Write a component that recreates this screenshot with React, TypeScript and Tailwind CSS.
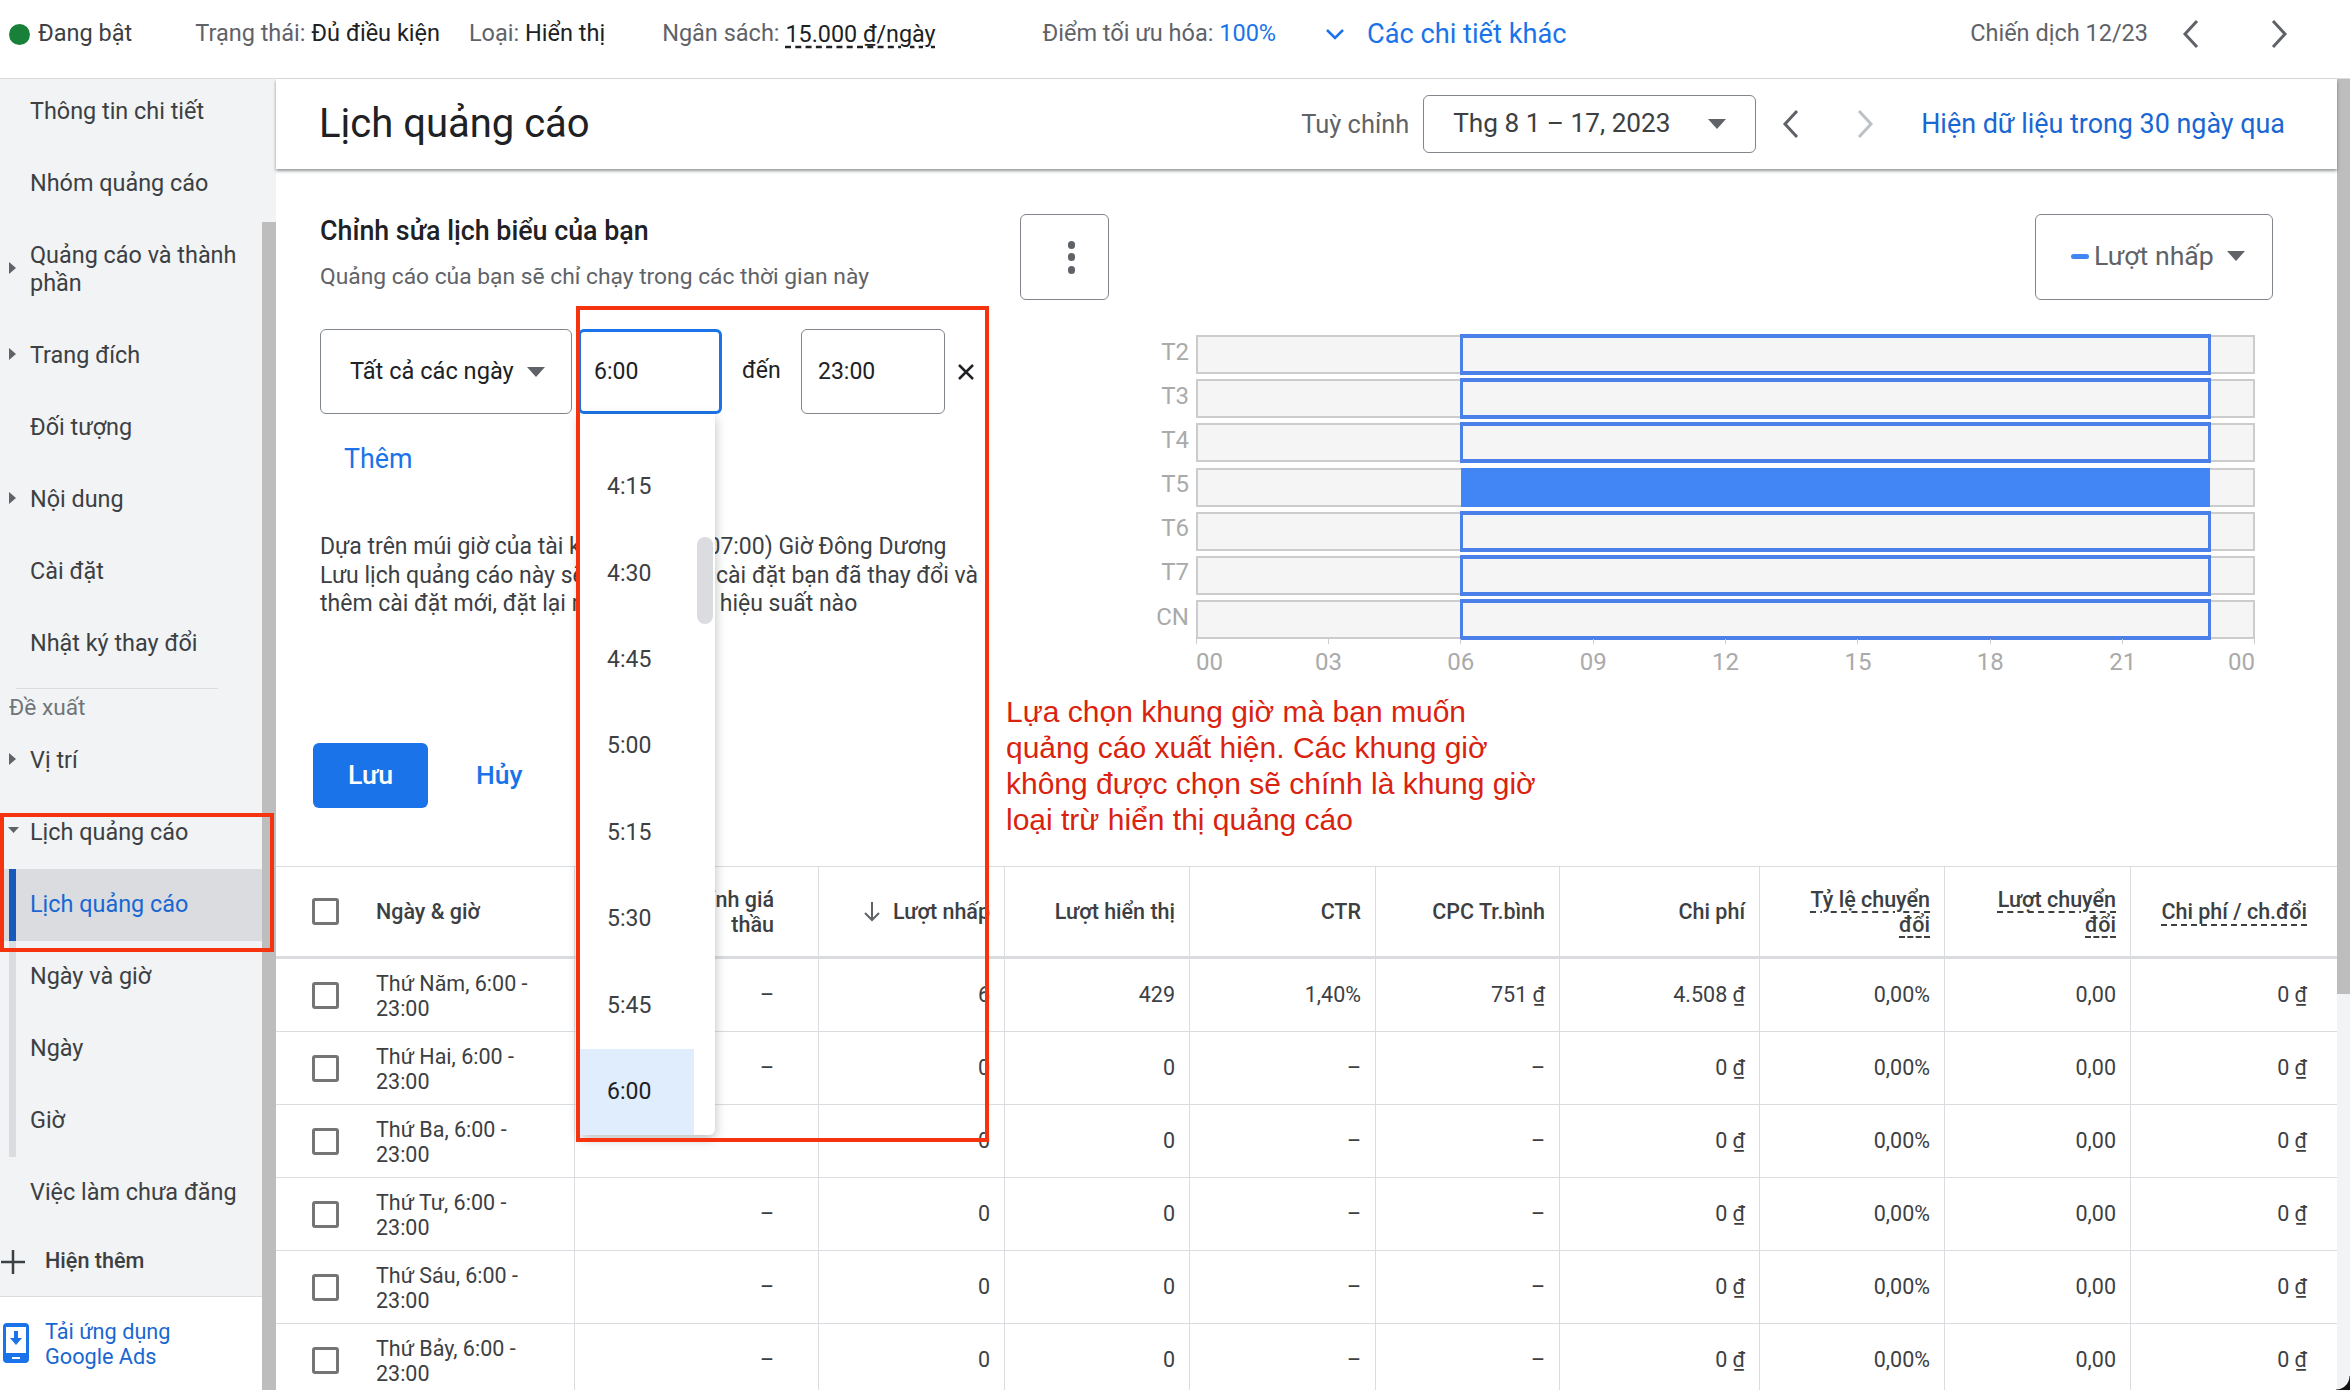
import type { ReactNode } from 'react';

function Chevron({ dir, color = '#5f6368' }: { dir: 'left' | 'right'; color?: string }) {
  return (
    <svg width="18" height="30" viewBox="0 0 18 30" fill="none" stroke={color} strokeWidth="3">
      <path d={dir === 'left' ? 'M15 2 L3 15 L15 28' : 'M3 2 L15 15 L3 28'} />
    </svg>
  );
}

function ArrowDown({ w = 18, h = 10, color = '#5f6368' }: { w?: number; h?: number; color?: string }) {
  return (
    <svg width={w} height={h} viewBox="0 0 18 10" preserveAspectRatio="none">
      <path d="M0 0 H18 L9 10 Z" fill={color} />
    </svg>
  );
}

function NavItem({ label, caret, className = 'h-[72px] pb-[2px]' }: { label: ReactNode; caret?: 'right' | 'down'; className?: string }) {
  return (
    <div className={`relative flex items-center pl-[30px] pr-2 text-[23.4px] leading-[28px] text-[#3c4043] ${className}`}>
      {caret === 'right' && (
        <svg className="absolute left-[9px] top-1/2 -mt-[8px]" width="7" height="12" viewBox="0 0 7 12">
          <path d="M0 0 L7 6 L0 12 Z" fill="#5f6368" />
        </svg>
      )}
      {caret === 'down' && (
        <svg className="absolute left-[8px] top-1/2 -mt-[6px]" width="11" height="6" viewBox="0 0 11 6">
          <path d="M0 0 H11 L5.5 6 Z" fill="#5f6368" />
        </svg>
      )}
      {label}
    </div>
  );
}

function Sidebar() {
  return (
    <div className="flex w-[262px] flex-none flex-col bg-[#f1f3f4]">
      <NavItem label="Thông tin chi tiết" className="h-[69px] pb-[5px]" />
      <NavItem label="Nhóm quảng cáo" />
      <NavItem label={<span>Quảng cáo và thành<br />phần</span>} caret="right" className="h-[100px] pb-[2px]" />
      <NavItem label="Trang đích" caret="right" />
      <NavItem label="Đối tượng" />
      <NavItem label="Nội dung" caret="right" />
      <NavItem label="Cài đặt" />
      <NavItem label="Nhật ký thay đổi" />
      <div className="mx-[16px] mt-[8px] h-[1px] w-[202px] bg-[#dadce0]" />
      <div className="flex h-[36px] items-center pl-[9px] pt-[3px] text-[22.7px] text-[#70757a]">Đề xuất</div>
      <NavItem label="Vị trí" caret="right" />
      <NavItem label="Lịch quảng cáo" caret="down" />
      <div className="relative">
        <div className="absolute left-[9px] top-0 h-[288px] w-[7px] bg-[#dadce0]" />
        <div className="absolute left-[9px] top-0 h-[72px] w-[7px] bg-[#185abc]" />
        <div className="flex h-[72px] items-center bg-[#dadce0] pb-[1px] pl-[30px] text-[23.4px] text-[#1967d2]">Lịch quảng cáo</div>
        <NavItem label="Ngày và giờ" />
        <NavItem label="Ngày" />
        <NavItem label="Giờ" />
      </div>
      <NavItem label="Việc làm chưa đăng" />
      <div className="flex h-[68px] flex-none items-center border-b border-[#dadce0] pb-[2px]">
        <svg className="ml-[1px]" width="24" height="24" viewBox="0 0 24 24" stroke="#3c4043" strokeWidth="2.5">
          <path d="M12 0 V24 M0 12 H24" />
        </svg>
        <span className="ml-[20px] text-[21.6px] font-medium text-[#3c4043]">Hiện thêm</span>
      </div>
      <div className="flex flex-1 items-start bg-white pt-[22px]">
        <svg className="ml-[3px] mt-[4px]" width="26" height="40" viewBox="0 0 26 40">
          <rect width="26" height="40" rx="4" fill="#1a73e8" />
          <rect x="3" y="4" width="20" height="26" fill="white" />
          <path d="M11 8 H15 V15 H19 L13 22 L7 15 H11 Z" fill="#1a73e8" />
          <rect x="9" y="34" width="8" height="2" fill="white" />
        </svg>
        <div className="ml-[16px] text-[21.7px] leading-[25px] text-[#1967d2]">Tải ứng dụng<br />Google Ads</div>
      </div>
    </div>
  );
}

function TopBar() {
  return (
    <div className="flex h-[79px] flex-none items-center border-b border-[#dadce0] bg-white pb-[10px] text-[23.5px] text-[#5f6368]">
      <div className="ml-[9px] h-[21px] w-[21px] flex-none rounded-full bg-[#188038]" />
      <span className="ml-[8px] text-[#3c4043]">Đang bật</span>
      <span className="ml-[63px]">Trạng thái: <span className="text-[#202124]">Đủ điều kiện</span></span>
      <span className="ml-[29px]">Loại: <span className="text-[#202124]">Hiển thị</span></span>
      <span className="ml-[57px]">Ngân sách:</span>
      <span className="ml-[6px] text-[23.3px] text-[#202124] underline decoration-dashed decoration-[#202124] underline-offset-[5px]">15.000 ₫/ngày</span>
      <span className="ml-[107px]">Điểm tối ưu hóa: <span className="text-[#1a73e8]">100%</span></span>
      <svg className="ml-[50px]" width="18" height="11" viewBox="0 0 18 11" fill="none" stroke="#1a73e8" strokeWidth="2.5">
        <path d="M1 1 L9 9 L17 1" />
      </svg>
      <span className="ml-[23px] text-[27.2px] text-[#1a73e8]">Các chi tiết khác</span>
      <span className="ml-auto">Chiến dịch 12/23</span>
      <div className="ml-[34px]"><Chevron dir="left" /></div>
      <div className="ml-[70px] mr-[62px]"><Chevron dir="right" /></div>
    </div>
  );
}

function PageHeader() {
  return (
    <div className="relative z-10 flex h-[90px] flex-none items-center bg-white pl-[43px] shadow-[0_2px_3px_rgba(60,64,67,0.55)]">
      <h1 className="text-[40px] font-normal text-[#202124]">Lịch quảng cáo</h1>
      <span className="ml-auto text-[25.4px] text-[#5f6368]">Tuỳ chỉnh</span>
      <div className="ml-[14px] flex h-[58px] w-[333px] items-center rounded-[6px] border border-[#80868b] pl-[29px] text-[26.2px] text-[#3c4043]">
        Thg 8 1 – 17, 2023
        <div className="ml-auto mr-[29px]"><ArrowDown /></div>
      </div>
      <div className="ml-[26px]"><Chevron dir="left" /></div>
      <div className="ml-[56px]"><Chevron dir="right" color="#bdc1c6" /></div>
      <span className="ml-[47px] mr-[52px] text-[26.9px] text-[#1967d2]">Hiện dữ liệu trong 30 ngày qua</span>
    </div>
  );
}

const times = ['4:15', '4:30', '4:45', '5:00', '5:15', '5:30', '5:45'];

function TimeDropdown() {
  return (
    <div className="absolute left-[2px] top-[85px] z-20 flex h-[721px] w-[135px] flex-col justify-end rounded-b-[6px] bg-white shadow-[0_4px_12px_rgba(60,64,67,0.35)]">
      <div className="absolute right-[2px] top-[123px] h-[87px] w-[16px] rounded-full bg-[#dadce0]" />
      {times.map((t) => (
        <div key={t} className="flex h-[86.4px] flex-none items-center pl-[27px] text-[23px] text-[#3c4043]">{t}</div>
      ))}
      <div className="flex h-[86px] w-[114px] flex-none items-center bg-[#e0edfd] pl-[27px] text-[23px] text-[#202124]">6:00</div>
    </div>
  );
}

function EditorForm() {
  return (
    <div className="w-[744px] flex-none pl-[44px]">
      <div className="mt-[46px] text-[26.8px] font-medium leading-[32px] text-[#202124]">Chỉnh sửa lịch biểu của bạn</div>
      <div className="mt-[16px] text-[22.8px] leading-[28px] text-[#5f6368]">Quảng cáo của bạn sẽ chỉ chạy trong các thời gian này</div>
      <div className="mt-[38px] flex h-[85px] items-center text-[23px] text-[#202124]">
        <div className="flex h-full w-[252px] items-center rounded-[6px] border border-[#80868b] pl-[29px] text-[23.6px]">
          Tất cả các ngày
          <div className="ml-[13px]"><ArrowDown /></div>
        </div>
        <div className="relative ml-[6px] h-full w-[144px]">
          <div className="flex h-full items-center rounded-[6px] border-[3px] border-[#1a73e8] pl-[13px] pt-[1px]">6:00</div>
          <TimeDropdown />
        </div>
        <span className="ml-[20px] w-[59px]">đến</span>
        <div className="flex h-full w-[144px] items-center rounded-[6px] border border-[#80868b] pl-[16px] pt-[1px]">23:00</div>
        <svg className="ml-[13px]" width="16" height="16" viewBox="0 0 16 16" stroke="#202124" strokeWidth="2.5">
          <path d="M1 1 L15 15 M15 1 L1 15" />
        </svg>
      </div>
      <div className="ml-[24px] mt-[30px] text-[26.8px] leading-[30px] text-[#1a73e8]">Thêm</div>
      <div className="mt-[59px] whitespace-nowrap text-[23px] leading-[28.5px] text-[#3c4043]">
        Dựa trên múi giờ của tài khoản (GMT+07:00) Giờ Đông Dương<br />
        Lưu lịch quảng cáo này sẽ xóa toàn bộ cài đặt bạn đã thay đổi và<br />
        thêm cài đặt mới, đặt lại mọi dữ liệu về hiệu suất nào
      </div>
      <div className="-ml-[7px] mt-[124px] flex items-center">
        <div className="flex h-[65px] w-[115px] items-center justify-center rounded-[6px] bg-[#1a73e8] text-[26.7px] font-medium text-white">Lưu</div>
        <span className="ml-[48px] text-[26.5px] font-medium text-[#1a73e8]">Hủy</span>
      </div>
    </div>
  );
}

const chartDays = ['T2', 'T3', 'T4', 'T5', 'T6', 'T7', 'CN'];
const ticks = ['03', '06', '09', '12', '15', '18', '21'];

function Chart() {
  return (
    <div className="mt-[35px] pl-[87px] text-[24px] text-[#aaaaaa]">
      <div className="flex flex-col gap-[5.2px]">
        {chartDays.map((d) => (
          <div key={d} className="-ml-[60px] flex h-[39px] items-center">
            <span className="w-[53px] pb-[6px] text-right leading-none">{d}</span>
            <div className="relative ml-[7px] h-full w-[1059px] border-[2px] border-[#cccccc] bg-[#f5f5f5]">
              {d === 'T5' ? (
                <div className="absolute -bottom-[2px] -top-[2px] left-[263px] w-[749px] bg-[#4285f4]" />
              ) : (
                <div className="absolute -bottom-[3px] -top-[3px] left-[262px] w-[751px] border-[3px] border-b-[4px] border-t-[4px] border-[#4a80e8]" />
              )}
            </div>
          </div>
        ))}
      </div>
      <div className="relative flex w-[1059px] justify-between">
        <div className="flex w-0 flex-none flex-col items-start">
          <div className="h-[5px] w-[1px] flex-none bg-[#cccccc]" />
          <div className="mt-[4px] leading-[28px]">00</div>
        </div>
        {ticks.map((t) => (
          <div key={t} className="flex w-0 flex-none flex-col items-center">
            <div className="h-[5px] w-[1px] flex-none bg-[#cccccc]" />
            <div className="mt-[4px] leading-[28px]">{t}</div>
          </div>
        ))}
        <div className="flex w-0 flex-none flex-col items-end">
          <div className="h-[5px] w-[1px] flex-none bg-[#cccccc]" />
          <div className="mt-[4px] leading-[28px]">00</div>
        </div>
      </div>
    </div>
  );
}

function Editor() {
  return (
    <div className="relative z-20 flex h-[697px] flex-none">
      <EditorForm />
      <div className="mt-[45px] flex h-[86px] w-[89px] flex-none flex-col items-center justify-center gap-[4.5px] rounded-[6px] border border-[#80868b] pl-[14px]">
        <div className="h-[8px] w-[7px] rounded-full bg-[#5f6368]" />
        <div className="h-[8px] w-[7px] rounded-full bg-[#5f6368]" />
        <div className="h-[8px] w-[7px] rounded-full bg-[#5f6368]" />
      </div>
      <div className="flex-1">
        <div className="mr-[64px] mt-[45px] ml-auto flex h-[86px] w-[238px] items-center rounded-[6px] border border-[#80868b] pb-[2px] pl-[35px] text-[26.7px] text-[#5f6368]">
          <div className="h-[5px] w-[18px] flex-none rounded-full bg-[#4285f4]" />
          <span className="ml-[5px] whitespace-nowrap">Lượt nhấp</span>
          <div className="ml-[13px]"><ArrowDown /></div>
        </div>
        <Chart />
      </div>
    </div>
  );
}

const gridCols = 'grid grid-cols-[299px_244px_186px_185px_186px_184px_200px_185px_186px_206px]';

const rows = [
  { d: 'Thứ Năm', clicks: '6', impr: '429', ctr: '1,40%', cpc: '751 ₫', cost: '4.508 ₫' },
  { d: 'Thứ Hai', clicks: '0', impr: '0', ctr: '–', cpc: '–', cost: '0 ₫' },
  { d: 'Thứ Ba', clicks: '0', impr: '0', ctr: '–', cpc: '–', cost: '0 ₫' },
  { d: 'Thứ Tư', clicks: '0', impr: '0', ctr: '–', cpc: '–', cost: '0 ₫' },
  { d: 'Thứ Sáu', clicks: '0', impr: '0', ctr: '–', cpc: '–', cost: '0 ₫' },
  { d: 'Thứ Bảy', clicks: '0', impr: '0', ctr: '–', cpc: '–', cost: '0 ₫' },
];

function Checkbox() {
  return <div className="ml-[36px] h-[27px] w-[27px] flex-none rounded-[3px] border-[3px] border-[#757575]" />;
}

function Num({ children, last, pr = 'pr-[14px]' }: { children: ReactNode; last?: boolean; pr?: string }) {
  return (
    <div className={`flex items-center justify-end whitespace-nowrap ${last ? '' : 'border-r'} border-[#dadce0] ${pr}`}>{children}</div>
  );
}

function Dashed({ children }: { children: ReactNode }) {
  return <span className="underline decoration-dashed decoration-[#3c4043] underline-offset-[5px]">{children}</span>;
}

function StatsTable() {
  return (
    <div className="flex-none">
      <div className={`${gridCols} h-[93px] border-b-[3px] border-t border-[#dadce0] text-right text-[21.5px] font-medium leading-[25px] text-[#3c4043]`}>
        <div className="flex items-center border-r border-[#dadce0]">
          <Checkbox />
          <span className="ml-[37px]">Ngày &amp; giờ</span>
        </div>
        <Num pr="pr-[44px]"><span>Điều chỉnh giá<br />thầu</span></Num>
        <Num>
          <svg className="mr-[13px]" width="16" height="20" viewBox="0 0 16 20" fill="none" stroke="#5f6368" strokeWidth="2">
            <path d="M8 0 V18 M1 11 L8 18 L15 11" />
          </svg>
          Lượt nhấp
        </Num>
        <Num>Lượt hiển thị</Num>
        <Num>CTR</Num>
        <Num>CPC Tr.bình</Num>
        <Num>Chi phí</Num>
        <Num><span><Dashed>Tỷ lệ chuyển</Dashed><br /><Dashed>đổi</Dashed></span></Num>
        <Num><span><Dashed>Lượt chuyển</Dashed><br /><Dashed>đổi</Dashed></span></Num>
        <Num last pr="pr-[30px]"><Dashed>Chi phí / ch.đổi</Dashed></Num>
      </div>
      {rows.map((r) => (
        <div key={r.d} className={`${gridCols} h-[73px] border-b border-[#dadce0] text-[21.5px] text-[#3c4043]`}>
          <div className="flex items-center border-r border-[#dadce0]">
            <Checkbox />
            <span className="ml-[37px] pt-[1px] leading-[25px]">{r.d}, 6:00 -<br />23:00</span>
          </div>
          <Num pr="pr-[44px] pt-[1px]">–</Num>
          <Num pr="pr-[14px] pt-[1px]">{r.clicks}</Num>
          <Num pr="pr-[14px] pt-[1px]">{r.impr}</Num>
          <Num pr="pr-[14px] pt-[1px]">{r.ctr}</Num>
          <Num pr="pr-[14px] pt-[1px]">{r.cpc}</Num>
          <Num pr="pr-[14px] pt-[1px]">{r.cost}</Num>
          <Num pr="pr-[14px] pt-[1px]">0,00%</Num>
          <Num pr="pr-[14px] pt-[1px]">0,00</Num>
          <Num last pr="pr-[30px] pt-[1px]">0 ₫</Num>
        </div>
      ))}
    </div>
  );
}

export default function App() {
  return (
    <div className="relative flex h-[1390px] w-[2350px] flex-col overflow-hidden bg-white font-['Roboto',sans-serif]">
      <TopBar />
      <div className="flex min-h-0 flex-1">
        <Sidebar />
        <div className="flex w-[14px] flex-none flex-col">
          <div className="h-[143px] bg-[#f1f3f4]" />
          <div className="flex-1 bg-[#bdbdbd]" />
        </div>
        <div className="flex min-w-0 flex-1 flex-col">
          <PageHeader />
          <Editor />
          <StatsTable />
        </div>
        <div className="flex w-[13px] flex-none flex-col">
          <div className="h-[915px] bg-[#bdbdbd]" />
          <div className="flex-1 bg-[#f1f3f4]" />
        </div>
      </div>

      {/* red annotation, drawn over the page */}
      <div className="absolute left-0 top-[813px] z-30 h-[139px] w-[274px] border-[4px] border-[#f5330e]" />
      <div className="absolute left-[576px] top-[306px] z-30 h-[836px] w-[413px] border-[4px] border-[#f5330e]" />
      <div className="absolute left-[1006px] top-[694px] z-30 whitespace-nowrap font-['Liberation_Sans',sans-serif] text-[30px] leading-[36px] text-[#d9230f]">
        Lựa chọn khung giờ mà bạn muốn<br />
        quảng cáo xuất hiện. Các khung giờ<br />
        không được chọn sẽ chính là khung giờ<br />
        loại trừ hiển thị quảng cáo
      </div>
      {/* screen corner */}
      <div className="absolute bottom-0 right-0 z-30 h-[14px] w-[14px] bg-[radial-gradient(circle_at_top_left,transparent_13px,#111111_14px)]" />
    </div>
  );
}
